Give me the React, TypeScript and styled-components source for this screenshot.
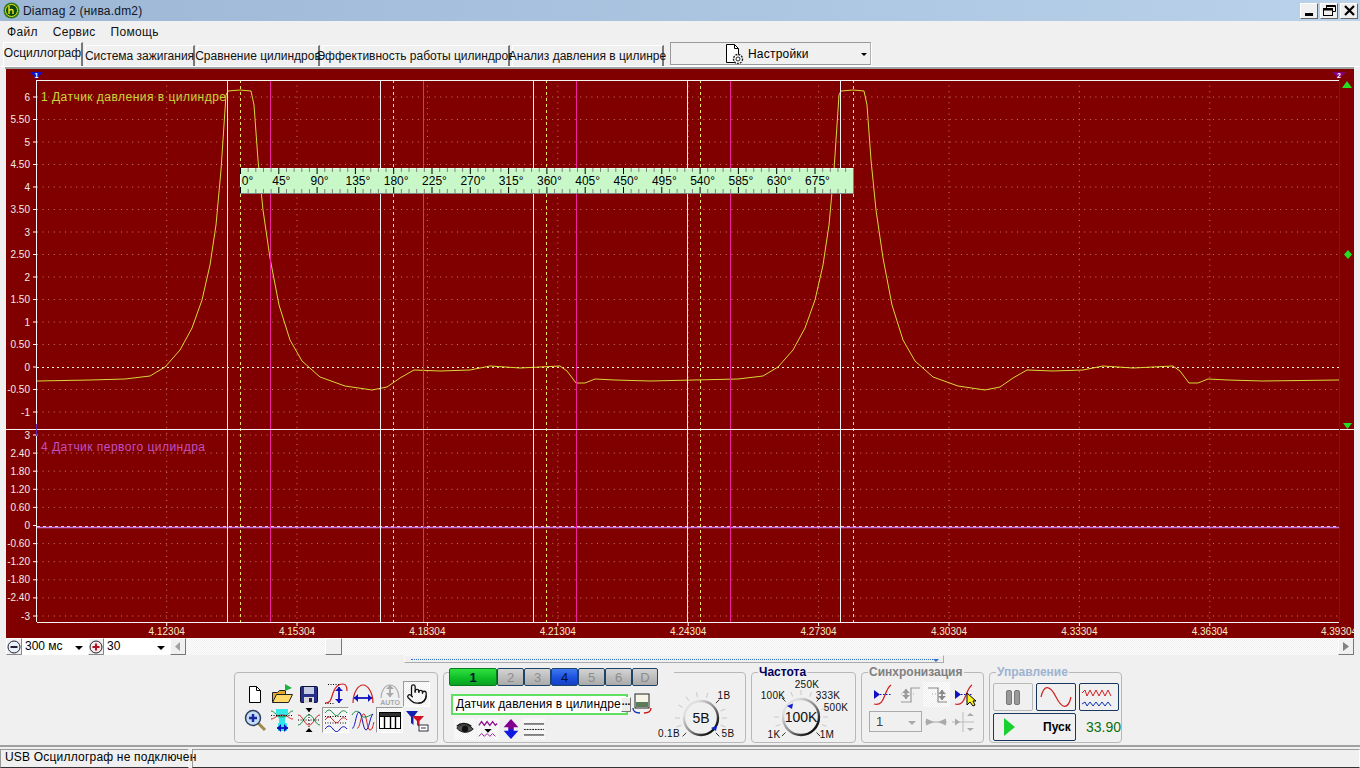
import React from "react";
import styled, { createGlobalStyle } from "styled-components";
import { Pointer } from "lucide-react";

const FONT = `"Liberation Sans", Arial, sans-serif`;
const DITHER = `repeating-conic-gradient(#ffffff 0 25%, #eeeeee 0 50%) 0 0 / 2px 2px`;

const GlobalStyle = createGlobalStyle`
  html, body { margin: 0; padding: 0; background: #f0f0f0; }
  body { font-family: ${FONT}; font-size: 12px; color: #000; }
  * { box-sizing: border-box; }
`;

const tabs = [
  { label: "Осциллограф", width: 80 },
  { label: "Система зажигания", width: 110 },
  { label: "Сравнение цилиндров", width: 123 },
  { label: "Эффективность работы цилиндров", width: 188 },
  { label: "Анализ давления в цилинре", width: 152 },
];

const channels = [
  { label: "1", kind: "green", width: 48 },
  { label: "2", kind: "off", width: 27 },
  { label: "3", kind: "off", width: 27 },
  { label: "4", kind: "blue", width: 27 },
  { label: "5", kind: "off", width: 27 },
  { label: "6", kind: "off", width: 27 },
  { label: "D", kind: "off", width: 26 },
];

const WHITE_X = [227, 380, 533, 687, 840];
const YELLOW_X = [240, 393, 546, 700, 853];
const MAGENTA_X = [270, 423, 576, 730];
const TIME_X = [166.7, 297, 427.4, 557.8, 688.2, 818.6, 949, 1079.4, 1209.8];
const TIME_LABELS = ["4.12304", "4.15304", "4.18304", "4.21304", "4.24304", "4.27304", "4.30304", "4.33304", "4.36304"];
const TOP_LABELS = ["6", "5.50", "5", "4.50", "4", "3.50", "3", "2.50", "2", "1.50", "1", "0.50", "0", "-0.50", "-1"];
const LOW_LABELS = ["3", "2.40", "1.80", "1.20", "0.60", "0", "-0.60", "-1.20", "-1.80", "-2.40", "-3"];
const DEGREES = [0, 45, 90, 135, 180, 225, 270, 315, 360, 405, 450, 495, 540, 585, 630, 675];

// one engine cycle of the pressure trace, repeated with a 613px period
const CYCLE: [number, number][] = [
  [37, 381], [90, 380], [125, 379], [150, 376], [165, 367], [180, 350], [192, 328], [202, 300],
  [210, 265], [216, 225], [221, 170], [224, 125], [226, 95], [228, 91], [240, 90], [251, 91],
  [254, 105], [258, 160], [263, 210], [270, 258], [279, 305], [290, 340], [302, 361], [320, 377],
  [345, 386], [372, 390], [387, 387], [400, 378], [414, 370], [440, 371], [470, 370], [490, 366],
  [520, 368], [560, 366], [567, 371], [576, 383], [585, 383], [595, 379], [615, 380], [650, 381],
];

const tracePoints = () => {
  const pts = [...CYCLE];
  CYCLE.forEach(([x, y]) => {
    if (x > 90 && x + 613 <= 1339) pts.push([x + 613, y]);
  });
  pts.push([1339, 380]);
  return pts.map(([x, y]) => `${x},${y}`).join(" ");
};

const ChartPicture = () => (
  <ChartSvg viewBox="6 69 1348 569" width={1348} height={569}>
    <rect x="6" y="69" width="1348" height="569" fill="#800000" />
    {TOP_LABELS.map((label, i) => {
      const y = 97 + i * 22.5;
      return (
        <g key={label}>
          {label !== "0" && <line x1="37" x2="1339" y1={y} y2={y} stroke="#cc7a66" strokeDasharray="1 4.6" />}
          <line x1="33" x2="37" y1={y} y2={y} stroke="#fff" />
          <text x="30" y={y + 3.5} textAnchor="end" fill="#f4ece4" fontSize="10">{label}</text>
        </g>
      );
    })}
    {LOW_LABELS.map((label, i) => {
      const y = 435 + i * 18.1;
      return (
        <g key={label}>
          {label !== "0" && <line x1="37" x2="1339" y1={y} y2={y} stroke="#cc7a66" strokeDasharray="1 4.6" />}
          <line x1="33" x2="37" y1={y} y2={y} stroke="#fff" />
          <text x="30" y={y + 3.5} textAnchor="end" fill="#f4ece4" fontSize="10">{label}</text>
        </g>
      );
    })}
    {TIME_X.map((x) => (
      <g key={x}>
        <line x1={x} x2={x} y1="80" y2="622" stroke="#cc7a66" strokeDasharray="1 4.6" />
        <line x1={x} x2={x} y1="622" y2="626" stroke="#fff" />
      </g>
    ))}
    <line x1="37" x2="1339" y1="367.5" y2="367.5" stroke="#fff0d8" strokeDasharray="2 3" />
    <line x1="37" x2="1339" y1="526.5" y2="526.5" stroke="#fff0d8" strokeDasharray="3 3" />

    <polyline points={tracePoints()} fill="none" stroke="#d8d838" strokeWidth="1" />
    <line x1="37" x2="1339" y1="527.5" y2="527.5" stroke="#c070e0" strokeWidth="1.6" />

    {WHITE_X.map((x) => (
      <line key={x} x1={x + 0.5} x2={x + 0.5} y1="80" y2="622" stroke="#f0f0f0" />
    ))}
    {YELLOW_X.map((x) => (
      <line key={x} x1={x + 0.5} x2={x + 0.5} y1="80" y2="622" stroke="#f4e860" strokeDasharray="3 3" />
    ))}
    {MAGENTA_X.map((x) => (
      <line key={x} x1={x + 0.5} x2={x + 0.5} y1="80" y2="622" stroke="#f020a0" />
    ))}

    <line x1="37" x2="1339" y1="80.5" y2="80.5" stroke="#f4f4f4" />
    <line x1="37" x2="1339" y1="622.5" y2="622.5" stroke="#f4f4f4" />
    <line x1="6" x2="1354" y1="429.5" y2="429.5" stroke="#f4f4f4" />
    <line x1="36.5" x2="36.5" y1="80" y2="622" stroke="#f4f4f4" />
    <line x1="36.5" x2="36.5" y1="424" y2="436" stroke="#6030b0" />
    <line x1="1339.5" x2="1339.5" y1="76" y2="622" stroke="#800080" />

    <path d="M30 72h13l-6.500 7z" fill="#1010c8" />
    <text x="36.500" y="77.500" textAnchor="middle" fill="#fff" fontSize="7" fontWeight="700">1</text>
    <path d="M1332 72h14l-7 7z" fill="#800080" />
    <text x="1339" y="77.500" textAnchor="middle" fill="#fff" fontSize="7" fontWeight="700">2</text>
    <path d="M1342 88l5-7 5 7z" fill="#20e020" />
    <path d="M1348 250l4 4.500-4 4.500-4-4.500z" fill="#20e020" />
    <path d="M1343 423h9l-4.500 6z" fill="#20e020" />

    <text x="41" y="101" fill="#c8d838" fontSize="12" textLength="185">1 Датчик давления в цилиндре</text>
    <text x="41" y="451" fill="#c050c0" fontSize="12" textLength="164">4 Датчик первого цилиндра</text>

    <rect x="240" y="168" width="613" height="25" fill="#c8f8c8" />
    <path d="M240 193.500h613.500V168" fill="none" stroke="#808080" />
    <path d="M240 168.500h613M240.500 168v25" fill="none" stroke="#e8ffe8" />
    {Array.from({ length: 80 }, (_, i) => {
      const x = 240.5 + i * 7.66;
      const major = i % 5 === 0;
      return (
        <g key={i} stroke={major ? "#000" : "#808080"}>
          <line x1={x} x2={x} y1="168" y2={major ? 174 : 172} />
          <line x1={x} x2={x} y1="193" y2={major ? 187 : 189} />
        </g>
      );
    })}
    {DEGREES.map((deg, i) => (
      <text key={deg} x={i === 0 ? 247.500 : 243 + i * 38.3} y="185" textAnchor="middle" fontSize="12" fill="#000">
        {deg}°
      </text>
    ))}

    {TIME_X.map((x, i) => (
      <text key={x} x={x} y="635" textAnchor="middle" fill="#f8ecc8" fontSize="10">{TIME_LABELS[i]}</text>
    ))}
    <text x="1339" y="635" textAnchor="middle" fill="#f8ecc8" fontSize="10">4.39304</text>
  </ChartSvg>
);

const AppIcon = () => (
  <svg width="17" height="17" viewBox="0 0 17 17">
    <circle cx="8.500" cy="8.500" r="8" fill="#2a7a18" />
    <circle cx="8.500" cy="8.500" r="6" fill="#0c4a10" stroke="#e8e020" />
    <path d="M6 4v8M6 9c1-2 4-2 4 0v3" stroke="#f0e820" strokeWidth="1.400" fill="none" />
  </svg>
);

const Ico = ({ children }: { children: React.ReactNode }) => (
  <svg width="24" height="24" viewBox="0 0 24 24" fill="none">{children}</svg>
);

const NewIcon = () => (
  <Ico>
    <path d="M6.500 4.500h7l4 4v12h-11z" fill="#fff" stroke="#000" />
    <path d="M13.500 4.500v4h4" stroke="#000" />
  </Ico>
);
const OpenIcon = () => (
  <Ico>
    <path d="M2.500 20.500v-10h5l2-2h6v4" fill="#e0a830" stroke="#222" />
    <path d="M2.500 20.500l4-8h16l-4 8z" fill="#ffd868" stroke="#222" />
    <path d="M15 9V2l7 4-7 3z" fill="#20b040" />
  </Ico>
);
const SaveIcon = () => (
  <Ico>
    <rect x="3.500" y="4.500" width="17" height="16" rx="1" fill="#28308a" stroke="#101040" />
    <rect x="7" y="5" width="10" height="7" fill="#c4cce4" />
    <rect x="7" y="15" width="10" height="6" fill="#d8d8d8" />
    <rect x="12" y="16" width="3" height="4" fill="#202040" />
  </Ico>
);
const ArrowV = ({ x, y1, y2, color = "#1010c0" }: { x: number; y1: number; y2: number; color?: string }) => (
  <g>
    <line x1={x} x2={x} y1={y1} y2={y2} stroke={color} strokeWidth="1.800" />
    <path d={`M${x - 4} ${y1 + 4}L${x} ${y1}l4 4zM${x - 4} ${y2 - 4}L${x} ${y2}l4-4z`} fill={color} />
  </g>
);
const ArrowH = ({ y, x1, x2, color = "#1010c0" }: { y: number; x1: number; x2: number; color?: string }) => (
  <g>
    <line x1={x1} x2={x2} y1={y} y2={y} stroke={color} strokeWidth="1.800" />
    <path d={`M${x1 + 4} ${y - 4}L${x1} ${y}l4 4zM${x2 - 4} ${y - 4}L${x2} ${y}l-4 4z`} fill={color} />
  </g>
);
const RiseIcon = () => (
  <Ico>
    <path d="M4 2.500h12M1 21.500h10" stroke="#000" strokeDasharray="1 1.500" />
    <path d="M1 21c6 0 6-4 8-10s5-9 10-9c3 0 4 3 4 7" stroke="#d02020" strokeWidth="1.200" />
    <ArrowV x={15} y1={5} y2={21} />
  </Ico>
);
const ArcIcon = () => (
  <Ico>
    <path d="M2 21c0-10 5-18 10-18s10 8 10 18" stroke="#d02020" strokeWidth="1.200" />
    <ArrowH y={16} x1={3} x2={21} />
  </Ico>
);
const AutoIcon = () => (
  <Ico>
    <path d="M3 16c0-7 4-13 9-13s9 6 9 13" stroke="#b0b0b0" strokeWidth="1.200" />
    <ArrowV x={12} y1={3} y2={15} color="#a8a8a8" />
    <text x="12" y="23" textAnchor="middle" fontSize="7" fontWeight="700" fill="#a8a8a8">AUTO</text>
  </Ico>
);
const ZoomIcon = () => (
  <Ico>
    <line x1="15" y1="15" x2="22" y2="22" stroke="#a08848" strokeWidth="3" />
    <circle cx="10" cy="10" r="7.500" fill="#c4dcf4" stroke="#304060" strokeWidth="1.500" />
    <path d="M6 10h8M10 6v8" stroke="#1828a0" strokeWidth="2.400" />
  </Ico>
);
const CyanIcon = () => (
  <Ico>
    <path d="M6 1h12v4l-3 6v7H9v-7L6 5z" fill="#30e8e8" />
    <rect x="8" y="15" width="9" height="8" fill="#30e8e8" />
    <path d="M1 3c4 0 5 6 11 6s7-6 11-6" stroke="#109040" />
    <path d="M1 11c4 0 5-4 11-4s7 4 11 4" stroke="#d02020" />
    <path d="M1 7.500h22" stroke="#000" strokeDasharray="1 1.500" />
    <ArrowH y={20} x1={7} x2={18} />
  </Ico>
);
const CrossIcon = () => (
  <Ico>
    <path d="M1 7c5 0 6 10 11 10s6-10 11-10" stroke="#d02020" />
    <path d="M1 17c5 0 6-10 11-10s6 10 11 10" stroke="#109040" />
    <path d="M1 12h22" stroke="#000" strokeDasharray="1 1.500" />
    <path d="M8.500 0h7L12 4zM8.500 24h7L12 20z" fill="#000" />
    <line x1="12" x2="12" y1="3" y2="21" stroke="#000" strokeDasharray="1 2" />
  </Ico>
);
const StackIcon = () => (
  <Ico>
    <path d="M1 5c3-4 5-4 8 0s5 3 7 0 5-3 7 0" stroke="#109040" />
    <path d="M1 12c3-4 5-4 8 0s5 3 7 0 5-3 7 0" stroke="#d02020" />
    <path d="M1 8.500h22M1 15h22" stroke="#000" strokeDasharray="1 1.500" />
    <path d="M1 21c3-4 5-4 8 0s5 3 7 0 5-3 7 0" stroke="#1010c0" />
  </Ico>
);
const OverlayIcon = () => (
  <Ico>
    <path d="M1 7c3-5 6-5 9 0s9 0 12-1" stroke="#109040" />
    <path d="M1 20c3 2 4-16 7-16s4 18 7 18 4-14 7-16" stroke="#1010c0" />
    <path d="M6 20c3 2 4-16 7-14s3 16 6 16 3-6 4-8" stroke="#d02020" />
  </Ico>
);
const TableIcon = () => (
  <Ico>
    <rect x="1.500" y="4.500" width="21" height="16" fill="#fff" stroke="#000" />
    <rect x="1.500" y="4.500" width="21" height="4" fill="#303030" stroke="#000" />
    <path d="M6.500 8v12M12.500 8v12M17.500 8v12" stroke="#000" strokeWidth="1.400" />
  </Ico>
);
const FilterIcon = () => (
  <Ico>
    <path d="M1 3h12L8.500 9v8L6 15V9z" fill="#1020b0" />
    <path d="M7 8h12l-4.500 5v6L12 17v-4z" fill="#d01020" />
    <rect x="14" y="17" width="9" height="6" fill="#fff" stroke="#334" />
    <path d="M16 20h5" stroke="#334" />
  </Ico>
);
const EyeIcon = () => (
  <Ico>
    <path d="M3 11c4-5 12-5 18 1-5 5-13 5-18-1z" fill="#555" stroke="#111" />
    <circle cx="12" cy="12" r="3.500" fill="#111" />
    <path d="M3 9c4-4 11-4 16 0" stroke="#111" strokeWidth="1.400" />
  </Ico>
);
const WaveDownIcon = () => (
  <Ico>
    <path d="M2 8l3-4 3 4 3-4 3 4 3-4 3 4 2-2" stroke="#901090" strokeWidth="1.400" />
    <path d="M8 12h8l-4 4z" fill="#000" />
    <path d="M2 20l3-3 3 3 3-3 3 3 3-3 3 3" stroke="#901090" />
  </Ico>
);
const BigArrowsIcon = () => (
  <Ico>
    <path d="M12 1l8 9h-5v2H9v-2H4z" fill="#800090" />
    <path d="M12 23l8-9h-5v-2H9v2H4z" fill="#1018e0" />
  </Ico>
);
const LinesIcon = () => (
  <Ico>
    <path d="M1 6.500h22M1 18.500h22" stroke="#000" />
    <path d="M1 12.500h22" stroke="#000" strokeDasharray="2 1" />
  </Ico>
);
const SyncRiseIcon = ({ cursor }: { cursor?: boolean }) => (
  <Ico>
    <path d="M3 21c7 2 9-4 11-9s3-8 6-10" stroke="#d02020" strokeWidth="1.300" />
    <path d="M3 7v9l6-4.500z" fill="#1010c0" />
    <path d="M9 11.500h12" stroke="#1010c0" strokeDasharray="1.500 1.500" />
    {cursor && <path d="M15 10v12l3-3 3 4 2-1-2-4h3z" fill="#f8f020" stroke="#000" />}
  </Ico>
);
const EdgeUpIcon = () => (
  <Ico>
    <path d="M3 19h10V5h9" stroke="#999" strokeWidth="1.200" />
    <ArrowV x={8} y1={6} y2={16} color="#999" />
    <path d="M3 11h15" stroke="#aaa" strokeDasharray="1 2" />
  </Ico>
);
const EdgeDownIcon = () => (
  <Ico>
    <path d="M3 5h10v14h9" stroke="#888" strokeWidth="1.200" />
    <ArrowV x={17} y1={7} y2={17} color="#888" />
    <path d="M7 11h15" stroke="#aaa" strokeDasharray="1 2" />
  </Ico>
);
const SqueezeIcon = () => (
  <Ico>
    <path d="M2 8.500v7L10 12zM22 8.500v7L14 12z" fill="#aaa" />
    <path d="M1 12h22" stroke="#aaa" />
  </Ico>
);
const SpreadIcon = () => (
  <Ico>
    <path d="M1 12h22M12 2v20" stroke="#bbb" />
    <path d="M9 12l-5-3.500v7zM23 6l-7 0 3-3zM23 18h-7l3 3z" fill="#aaa" />
  </Ico>
);

const Knob = ({ w, h, cx, cy, r, value, valueSize, marker, labels, ticks }: {
  w: number; h: number; cx: number; cy: number; r: number; value: string; valueSize: number;
  marker: [number, number]; labels: { text: string; x: number; y: number }[]; ticks: number[];
}) => {
  const id = `ring${cx}${r}`;
  return (
    <svg width={w} height={h} viewBox={`0 0 ${w} ${h}`}>
      <defs>
        <linearGradient id={id} x1="0" y1="0" x2="1" y2="1">
          <stop offset="0.2" stopColor="#e0e0e0" />
          <stop offset="0.55" stopColor="#808080" />
          <stop offset="0.85" stopColor="#101010" />
        </linearGradient>
      </defs>
      {ticks.map((deg) => {
        const a = (deg * Math.PI) / 180;
        const major = deg % 45 === 0 && deg % 90 !== 0 ? "#333" : "#c8c8c8";
        return (
          <line
            key={deg}
            x1={cx + Math.cos(a) * (r + 4)}
            y1={cy + Math.sin(a) * (r + 4)}
            x2={cx + Math.cos(a) * (r + 9)}
            y2={cy + Math.sin(a) * (r + 9)}
            stroke={major}
          />
        );
      })}
      <circle cx={cx} cy={cy} r={r} fill="#f0f0f0" stroke={`url(#${id})`} strokeWidth="2.400" />
      <path d={`M${marker[0]} ${marker[1]}l6-2.500-1 5.500z`} fill="#1020d0" />
      <text x={cx} y={cy + 5} textAnchor="middle" fontSize={valueSize} fill="#111">{value}</text>
      {labels.map((l) => (
        <text key={l.text} x={l.x} y={l.y} textAnchor="middle" fontSize="10" letterSpacing="0.3" fill="#111">{l.text}</text>
      ))}
    </svg>
  );
};

const toolIcons: { node: React.ReactNode; on?: boolean }[] = [
  { node: <NewIcon /> },
  { node: <OpenIcon /> },
  { node: <SaveIcon /> },
  { node: <RiseIcon /> },
  { node: <ArcIcon /> },
  { node: <AutoIcon /> },
  { node: <Pointer size={22} strokeWidth={1.4} color="#111" />, on: true },
  { node: <ZoomIcon /> },
  { node: <CyanIcon /> },
  { node: <CrossIcon /> },
  { node: <StackIcon />, on: true },
  { node: <OverlayIcon /> },
  { node: <TableIcon />, on: true },
  { node: <FilterIcon /> },
];

export default function App() {
  return (
    <Page>
      <GlobalStyle />
      <TitleBar>
        <AppIcon />
        <TitleText>Diamag 2 (нива.dm2)</TitleText>
        <WindowButtons>
          <WinBtn><svg width="11" height="10"><rect x="1" y="7" width="8" height="3" fill="#000" /></svg></WinBtn>
          <WinBtn>
            <svg width="13" height="11" viewBox="0 0 13 11" fill="none" stroke="#000">
              <path d="M3.500 3V.5h9v6H9.500" /><path d="M3 1h9" strokeWidth="2" />
              <rect x=".5" y="3.500" width="9" height="7" /><path d="M0 4.500h10" strokeWidth="2" />
            </svg>
          </WinBtn>
          <WinBtn>
            <svg width="11" height="11" viewBox="0 0 11 11"><path d="M1 1l9 9M10 1l-9 9" stroke="#000" strokeWidth="2.200" /></svg>
          </WinBtn>
        </WindowButtons>
      </TitleBar>

      <MenuBar>
        <MenuItem>Файл</MenuItem>
        <MenuItem>Сервис</MenuItem>
        <MenuItem>Помощь</MenuItem>
      </MenuBar>

      <TabRow>
        {tabs.map((t, i) => (
          <Tab key={t.label} $active={i === 0} $width={t.width}>{t.label}</Tab>
        ))}
        <SettingsCombo>
          <svg width="22" height="22" viewBox="0 0 22 22" fill="none">
            <path d="M3.500 1.500h8l4 4v14h-12z" fill="#fff" stroke="#000" />
            <path d="M11.500 1.500v4h4" stroke="#000" />
            <circle cx="15" cy="16" r="4.500" fill="#fff" stroke="#222" strokeWidth="1.400" strokeDasharray="2 1" />
            <circle cx="15" cy="16" r="2" stroke="#222" />
          </svg>
          <SettingsText>Настройки</SettingsText>
          <ComboCaret />
        </SettingsCombo>
      </TabRow>

      <TabPage>
        <ChartPicture />
        <ScopeBar>
          <RoundBtn>
            <svg width="14" height="14" viewBox="0 0 14 14"><circle cx="7" cy="7" r="6" fill="#e8f0f8" stroke="#223" /><path d="M3.500 7h7" stroke="#223" strokeWidth="2" /></svg>
          </RoundBtn>
          <ScopeCombo $width={66}>300 мс<ComboCaret /></ScopeCombo>
          <RoundBtn>
            <svg width="14" height="14" viewBox="0 0 14 14"><circle cx="7" cy="7" r="6" fill="#f8e8e8" stroke="#223" /><path d="M3.500 7h7M7 3.500v7" stroke="#b01020" strokeWidth="2" /></svg>
          </RoundBtn>
          <ScopeCombo $width={66}>30<ComboCaret /></ScopeCombo>
          <ScrollTrack>
            <ScrollBtn><svg width="6" height="9"><path d="M5 0v9L0 4.500z" fill="#a0a0a0" /></svg></ScrollBtn>
            <ScrollThumb />
            <ScrollBtn><svg width="6" height="9"><path d="M0 0v9l6-4.500z" fill="#808080" /></svg></ScrollBtn>
          </ScrollTrack>
        </ScopeBar>
        <SplitterRow>
          <Splitter />
        </SplitterRow>
      </TabPage>

      <ControlArea>
        <Group $width={204}>
          <ToolGrid>
            {toolIcons.map((t, i) => (
              <ToolCell key={i} $on={t.on}>{t.node}</ToolCell>
            ))}
          </ToolGrid>
        </Group>

        <Group $width={303}>
          <ChannelRow>
            {channels.map((c) => (
              <ChannelBtn key={c.label} $kind={c.kind} $width={c.width}>{c.label}</ChannelBtn>
            ))}
          </ChannelRow>
          <ChannelBody>
            <div>
              <SensorRow>
                <SensorField>
                  Датчик давления в цилиндре
                  <DotsBtn>...</DotsBtn>
                </SensorField>
                <svg width="22" height="22" viewBox="0 0 22 22" fill="none">
                  <rect x="4" y="1" width="14" height="14" fill="#f4f4e8" stroke="#222" />
                  <rect x="5" y="9" width="12" height="5" fill="#5a7a5a" />
                  <path d="M2 15c0 4 3 5 7 5" stroke="#1030b0" strokeWidth="1.300" />
                  <path d="M20 15c0 4-3 5-7 5" stroke="#d01010" strokeWidth="1.300" />
                </svg>
              </SensorRow>
              <SensorTools>
                <SensorTool $on><EyeIcon /></SensorTool>
                <SensorTool $on><WaveDownIcon /></SensorTool>
                <SensorTool><BigArrowsIcon /></SensorTool>
                <SensorTool $on><LinesIcon /></SensorTool>
              </SensorTools>
            </div>
            <KnobSlot>
              <Knob
                w={92} h={56} cx={44} cy={31} r={17} value="5В" valueSize={14}
                marker={[54, 41]}
                ticks={[-150, -125, -100, -75, -45, -20, 0, 20, 45, 135, 160, 180]}
                labels={[
                  { text: "1В", x: 67, y: 12 },
                  { text: "0.1В", x: 12, y: 50 },
                  { text: "5В", x: 71, y: 50 },
                ]}
              />
            </KnobSlot>
          </ChannelBody>
        </Group>

        <Group $width={105}>
          <Legend $color="#000060">Частота</Legend>
          <KnobTop>
            <Knob
              w={103} h={68} cx={49} cy={43} r={18} value="100K" valueSize={14}
              marker={[35, 32]}
              ticks={[-135, -112, -90, -67, -45, -20, 0, 20, 45, 135, 160, 180]}
              labels={[
                { text: "250K", x: 55, y: 14 },
                { text: "100K", x: 21, y: 25 },
                { text: "333K", x: 76, y: 25 },
                { text: "500K", x: 84, y: 37 },
                { text: "1K", x: 22, y: 64 },
                { text: "1M", x: 75, y: 64 },
              ]}
            />
          </KnobTop>
        </Group>

        <Group $width={123}>
          <Legend $color="#808080">Синхронизация</Legend>
          <SyncBody>
            <SyncRow>
              <SyncCell><SyncRiseIcon /></SyncCell>
              <SyncCell><EdgeUpIcon /></SyncCell>
              <SyncCell $on><EdgeDownIcon /></SyncCell>
              <SyncCell><SyncRiseIcon cursor /></SyncCell>
            </SyncRow>
            <SyncRow>
              <SyncCombo>1<ComboCaret $muted /></SyncCombo>
              <SyncCell><SqueezeIcon /></SyncCell>
              <SyncCell><SpreadIcon /></SyncCell>
            </SyncRow>
          </SyncBody>
        </Group>

        <Group $width={133}>
          <Legend $color="#9db3d0">Управление</Legend>
          <ControlBody>
            <CtrlRow>
              <CtrlBtn $muted>
                <svg width="14" height="18"><rect x=".5" y="2.500" width="5" height="14" rx="1.500" fill="#999" stroke="#777" /><rect x="8.500" y="2.500" width="5" height="14" rx="1.500" fill="#999" stroke="#777" /></svg>
              </CtrlBtn>
              <CtrlBtn>
                <svg width="32" height="22" viewBox="0 0 32 22" fill="none"><path d="M1 11C4-2 10-1 16 11s12 13 15 0" stroke="#d02020" strokeWidth="1.200" /></svg>
              </CtrlBtn>
              <CtrlBtn>
                <svg width="36" height="24" viewBox="0 0 36 24" fill="none">
                  <path d="M1 8l3-3 2 6 3-6 3 6 3-6 3 6 3-6 3 6 3-6 3 6" stroke="#d02020" />
                  <path d="M1 19l3-2 2 4 3-4 3 4 3-4 3 4 3-4 3 4 3-4 3 4" stroke="#1030b0" />
                </svg>
              </CtrlBtn>
            </CtrlRow>
            <CtrlRow>
              <StartBtn>
                <svg width="12" height="18"><path d="M0 0v18l11-9z" fill="#18d030" /></svg>
                <StartLabel>Пуск</StartLabel>
              </StartBtn>
              <Speed>33.90</Speed>
            </CtrlRow>
          </ControlBody>
        </Group>
      </ControlArea>

      <StatusBar>
        <StatusCell $width={189}>USB Осциллограф не подключен</StatusCell>
        <StatusCell $grow />
      </StatusBar>
    </Page>
  );
}

const Page = styled.div`
  width: 1360px;
  height: 768px;
  overflow: hidden;
  display: flex;
  flex-direction: column;
  background: #f0f0f0;
`;

const TitleBar = styled.div`
  height: 21px;
  display: flex;
  align-items: center;
  padding-left: 3px;
  background: linear-gradient(90deg, #9db7d6, #adc6e2 60%, #bad2ea);
`;
const TitleText = styled.span`
  margin-left: 3px;
  font-size: 12px;
  letter-spacing: 0.2px;
  color: #101828;
`;
const WindowButtons = styled.div`
  margin-left: auto;
  margin-right: 2px;
  display: flex;
  gap: 2px;
`;
const WinBtn = styled.div`
  width: 18px;
  height: 16px;
  display: flex;
  align-items: center;
  justify-content: center;
  background: #f0f0f0;
  border: 1px solid;
  border-color: #fff #666 #666 #fff;
`;

const MenuBar = styled.div`
  height: 21px;
  display: flex;
  align-items: center;
  padding-left: 7px;
  gap: 15px;
`;
const MenuItem = styled.span`
  font-size: 12px;
  letter-spacing: 0.3px;
  color: #111;
`;

const TabRow = styled.div`
  height: 24px;
  display: flex;
  align-items: flex-end;
  padding-left: 3px;
  gap: 2px;
`;
const Tab = styled.div<{ $active?: boolean; $width: number }>`
  width: ${(p) => p.$width}px;
  height: ${(p) => (p.$active ? 24 : 21)}px;
  margin-right: ${(p) => (p.$active ? 0 : 0)}px;
  display: flex;
  align-items: center;
  justify-content: center;
  white-space: nowrap;
  font-size: 12px;
  color: #111;
  padding-bottom: ${(p) => (p.$active ? 3 : 0)}px;
  background: #f0f0f0;
  border-top: 1px solid #fff;
  border-left: 1px solid #fff;
  border-right: 2px solid #777;
`;
const SettingsCombo = styled.div`
  position: relative;
  width: 201px;
  height: 23px;
  margin-left: 4px;
  margin-bottom: 1px;
  display: flex;
  align-items: center;
  padding-left: 52px;
  background: #f0f0f0;
  border: 1px solid #9a9a9a;
  border-right-color: #b0b0b0;
  box-shadow: 1px 1px 0 #fff;
`;
const SettingsText = styled.span`
  margin-left: 3px;
  font-size: 12px;
  letter-spacing: 0.2px;
`;
const ComboCaret = styled.i<{ $muted?: boolean }>`
  position: absolute;
  right: 3px;
  top: 50%;
  margin-top: -1px;
  width: 0;
  height: 0;
  border-left: 3px solid transparent;
  border-right: 3px solid transparent;
  border-top: 3px solid ${(p) => (p.$muted ? "#aaa" : "#000")};
`;

const TabPage = styled.div`
  height: 598px;
  padding: 0 6px 0 5px;
  border-top: 1px solid #fff;
  display: flex;
  flex-direction: column;
  position: relative;

  &::before {
    content: "";
    height: 2px;
    background: #a0a0a0;
    flex: none;
  }
`;
const ChartSvg = styled.svg`
  display: block;
  flex: none;
  font-family: ${FONT};
  margin-left: 1px;
`;

const ScopeBar = styled.div`
  height: 17px;
  margin-left: 1px;
  display: flex;
  align-items: stretch;
  flex: none;
`;
const RoundBtn = styled.div`
  width: 16px;
  display: flex;
  align-items: center;
  justify-content: center;
  background: #f0f0f0;
  border: 1px solid;
  border-color: #fff #888 #888 #fff;
`;
const ScopeCombo = styled.div<{ $width: number }>`
  position: relative;
  width: ${(p) => p.$width}px;
  background: #fff;
  padding-left: 3px;
  line-height: 17px;
  font-size: 12px;

  ${ComboCaret} {
    right: 5px;
    border-left-width: 4px;
    border-right-width: 4px;
    border-top-width: 4px;
  }
`;
const ScrollTrack = styled.div`
  flex: 1;
  display: flex;
  background: ${DITHER};
  margin-left: 0;
  position: relative;
  justify-content: space-between;
`;
const ScrollBtn = styled.div`
  width: 16px;
  display: flex;
  align-items: center;
  justify-content: center;
  background: #f0f0f0;
  border: 1px solid;
  border-color: #fff #777 #777 #fff;
`;
const ScrollThumb = styled(ScrollBtn)`
  position: absolute;
  left: 155px;
  top: 0;
  bottom: 0;
  width: 17px;
`;
const SplitterRow = styled.div`
  height: 9px;
  flex: none;
  padding-left: 399px;
`;
const Splitter = styled.div`
  position: relative;
  width: 540px;
  height: 8px;
  border: 1px solid;
  border-color: #f8f8f8 #aaa #aaa #f8f8f8;

  &::before {
    content: "";
    position: absolute;
    left: 6px;
    right: 6px;
    top: 3px;
    border-top: 1px dotted #3070c8;
  }
  &::after {
    content: "";
    position: absolute;
    left: 528px;
    top: 3px;
    border-left: 3px solid transparent;
    border-right: 3px solid transparent;
    border-top: 3px solid #3070c8;
  }
`;

const ControlArea = styled.div`
  height: 83px;
  display: flex;
  gap: 5px;
  padding: 8px 0 4px 234px;
  border-bottom: 2px solid #a0a0a0;
`;
const Group = styled.div<{ $width: number }>`
  position: relative;
  width: ${(p) => p.$width}px;
  height: 71px;
  border: 1px solid #b8b8b8;
  border-radius: 4px;
`;
const Legend = styled.div<{ $color: string }>`
  position: absolute;
  left: 6px;
  top: -7px;
  padding: 0 1px;
  height: 13px;
  line-height: 13px;
  background: #f0f0f0;
  font-size: 12px;
  font-weight: 700;
  color: ${(p) => p.$color};
`;

const ToolGrid = styled.div`
  display: grid;
  grid-template-columns: repeat(7, 27px);
  grid-auto-rows: 26px;
  padding: 8px 0 0 6px;
`;
const ToolCell = styled.div<{ $on?: boolean }>`
  display: flex;
  align-items: center;
  justify-content: center;
  background: ${(p) => (p.$on ? DITHER : "none")};
  border: 1px solid ${(p) => (p.$on ? "#fff" : "transparent")};
  border-top-color: ${(p) => (p.$on ? "#999" : "transparent")};
  border-left-color: ${(p) => (p.$on ? "#999" : "transparent")};
`;

const ChannelRow = styled.div`
  position: absolute;
  left: 5px;
  top: -5px;
  display: flex;
  background: #f0f0f0;
  padding-right: 16px;
`;
const CHANNEL_BG: Record<string, string> = {
  green: "linear-gradient(#30e040, #10c028 55%, #0aa020)",
  blue: "linear-gradient(#4078f0, #1c50e0 55%, #1440c0)",
  off: "linear-gradient(#d4d4d4, #bcbcbc 55%, #aaaaaa)",
};
const ChannelBtn = styled.div<{ $kind: string; $width: number }>`
  width: ${(p) => p.$width}px;
  height: 18px;
  display: flex;
  align-items: center;
  justify-content: center;
  font-size: 13px;
  font-weight: ${(p) => (p.$kind === "green" ? 700 : 400)};
  color: ${(p) => (p.$kind === "off" ? "#8c8c8c" : "#041030")};
  background: ${(p) => CHANNEL_BG[p.$kind]};
  border: 1px solid ${(p) => (p.$kind === "green" ? "#0a7a20" : "#1c4468")};
  border-radius: 2px;
`;
const ChannelBody = styled.div`
  display: flex;
  padding: 20px 0 0 7px;
`;
const SensorRow = styled.div`
  display: flex;
  align-items: center;
  gap: 3px;
`;
const SensorField = styled.div`
  width: 177px;
  height: 21px;
  display: flex;
  align-items: center;
  justify-content: space-between;
  padding: 0 1px 0 3px;
  background: #fff;
  border: 2px solid #60e060;
  font-size: 12px;
  letter-spacing: 0.1px;
  white-space: nowrap;
`;
const DotsBtn = styled.span`
  width: 17px;
  height: 15px;
  display: flex;
  align-items: center;
  justify-content: center;
  padding-bottom: 5px;
  font-weight: 700;
  font-size: 10px;
  background: #ececec;
  border: 1px solid;
  border-color: #fff #777 #777 #fff;
`;
const SensorTools = styled.div`
  display: flex;
  gap: 1px;
  padding: 3px 0 0 3px;
`;
const SensorTool = styled.div<{ $on?: boolean }>`
  width: 22px;
  height: 22px;
  display: flex;
  align-items: center;
  justify-content: center;
  background: ${(p) => (p.$on ? DITHER : "none")};
`;
const KnobSlot = styled.div`
  margin: -6px 0 0 4px;
`;
const KnobTop = styled.div`
  padding-top: 1px;
`;

const SyncBody = styled.div`
  display: flex;
  flex-direction: column;
  gap: 2px;
  padding: 9px 0 0 7px;
`;
const SyncRow = styled.div`
  display: flex;
  align-items: center;
`;
const SyncCell = styled.div<{ $on?: boolean }>`
  width: 27px;
  height: 25px;
  display: flex;
  align-items: center;
  justify-content: center;
  background: ${(p) => (p.$on ? DITHER : "none")};
`;
const SyncCombo = styled.div`
  position: relative;
  width: 53px;
  height: 21px;
  margin-right: 0;
  padding-left: 6px;
  line-height: 19px;
  font-size: 13px;
  border: 1px solid #aaa;
  color: #444;

  ${ComboCaret} {
    right: 5px;
    border-left-width: 4px;
    border-right-width: 4px;
    border-top-width: 4px;
  }
`;

const ControlBody = styled.div`
  display: flex;
  flex-direction: column;
  gap: 2px;
  padding: 10px 0 0 3px;
`;
const CtrlRow = styled.div`
  display: flex;
  align-items: center;
  gap: 3px;
`;
const CtrlBtn = styled.div<{ $muted?: boolean }>`
  width: 40px;
  height: 28px;
  display: flex;
  align-items: center;
  justify-content: center;
  background: #f0f0f0;
  border: 1px solid ${(p) => (p.$muted ? "#b8b8b8" : "#17375e")};
  border-radius: 2px;
`;
const StartBtn = styled.div`
  width: 83px;
  height: 28px;
  display: flex;
  align-items: center;
  padding-left: 10px;
  background: #f0f0f0;
  border: 1px solid #17375e;
  border-radius: 2px;
`;
const StartLabel = styled.span`
  margin-left: 27px;
  font-size: 12px;
  font-weight: 700;
`;
const Speed = styled.span`
  margin-left: 7px;
  font-size: 14px;
  color: #0a700a;
`;

const StatusBar = styled.div`
  flex: 1;
  display: flex;
  gap: 3px;
  padding-top: 2px;
`;
const StatusCell = styled.div<{ $width?: number; $grow?: boolean }>`
  width: ${(p) => (p.$width ? `${p.$width}px` : "auto")};
  flex: ${(p) => (p.$grow ? 1 : "none")};
  padding-left: 4px;
  line-height: 15px;
  font-size: 12px;
  letter-spacing: 0.2px;
  white-space: nowrap;
  border: 1px solid;
  border-color: #999 #fff #333 #999;
`;
